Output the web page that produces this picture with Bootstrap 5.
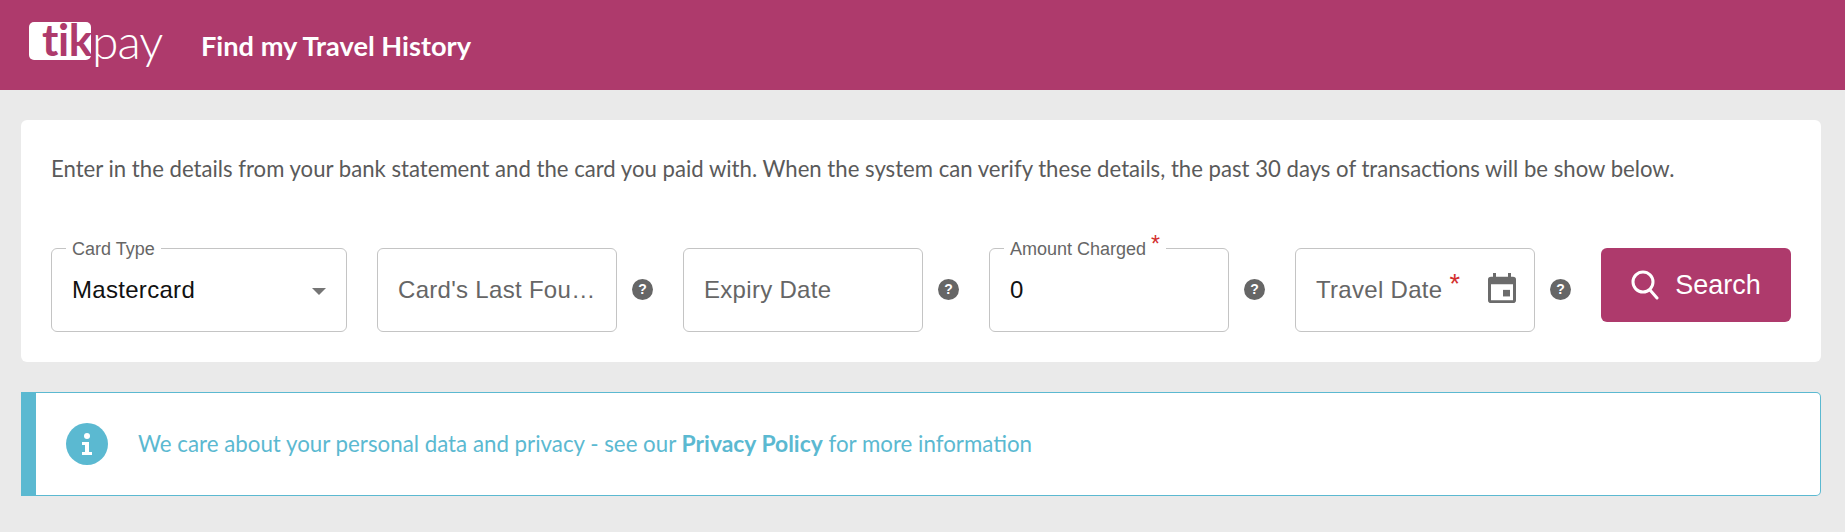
<!doctype html>
<html lang="en">

<head>
  <meta charset="utf-8">
  <meta name="viewport" content="width=device-width, initial-scale=1">
  <title>Find my Travel History</title>

  <link href="https://cdn.jsdelivr.net/npm/bootstrap@5.3.0/dist/css/bootstrap.min.css" rel="stylesheet">

  <style>
    body {
      background-color: #eaeaea;
      font-family: "Lato", sans-serif;
      color: #5a5a5a;
    }

    .top-bar {
      height: 90px;
      padding: 0 0 0 29px;
      background-color: #ae3a6c;
      flex-wrap: nowrap;
      justify-content: flex-start;
    }

    .logo {
      width: 134px;
      height: 46px;
      margin-top: -1px;
      margin-right: 38px;
      position: relative;
      flex: none;
    }

    .logo-box {
      position: absolute;
      left: 0;
      top: 0;
      width: 62px;
      height: 38px;
      background-color: #fff;
      border-radius: 5px;
    }

    .logo-tik {
      position: absolute;
      left: 13px;
      top: -9px;
      font: 700 44px/52px "Lato", sans-serif;
      letter-spacing: -.4px;
      color: #ae3a6c;
    }

    .logo-pay {
      position: absolute;
      left: 63px;
      top: -7px;
      font: 300 48px/52px "Lato", sans-serif;
      letter-spacing: -1px;
      color: #fff;
    }

    .page-title {
      font-size: 27.2px;
      font-weight: 700;
      color: #fff;
      margin: 3px 0 0;
    }

    .search-card {
      margin: 30px 24px 0 21px;
      height: 242px;
      padding: 36px 30px 0;
      border: 0;
      border-radius: 6px;
    }

    .intro {
      font-size: 22.15px;
      line-height: 26px;
      margin: 0 0 66px;
      white-space: nowrap;
    }

    .field {
      position: relative;
      width: 240px;
      height: 84px;
      padding: 0 20px;
      flex: none;
      border: 1px solid #c4c4c4;
      border-radius: 6px;
      font: 24px "Liberation Sans", Arial, sans-serif;
      color: #666;
      letter-spacing: .3px;
      white-space: nowrap;
    }

    .field-wide {
      width: 296px;
      margin-right: 30px;
    }

    .field-value {
      color: #111;
      letter-spacing: .3px;
    }

    .field-label {
      position: absolute;
      left: 14px;
      top: -10px;
      padding: 0 6px;
      background-color: #fff;
      font-size: 18px;
      line-height: 20px;
      letter-spacing: 0;
      color: #666;
      white-space: nowrap;
    }

    .req {
      color: #d32f2f;
    }

    .req-label {
      position: relative;
      top: -3px;
      font-size: 23px;
      line-height: 0;
    }

    .req-big {
      position: relative;
      top: -5px;
      font-size: 27px;
      line-height: 0;
    }

    .caret {
      position: absolute;
      right: 20px;
      top: 39px;
      width: 0;
      height: 0;
      border-left: 7px solid transparent;
      border-right: 7px solid transparent;
      border-top: 7px solid #757575;
    }

    .help {
      width: 21px;
      height: 21px;
      margin: 0 30px 1px 15px;
      flex: none;
      border-radius: 50%;
      background-color: #666;
      color: #fff;
      font: 700 14px/21px "Liberation Sans", Arial, sans-serif;
      text-align: center;
    }

    .cal-icon {
      margin: 0 -2px 4px 0;
      flex: none;
    }

    .btn-search {
      width: 190px;
      height: 74px;
      margin: 0 0 10px 0;
      flex: none;
      border: 0;
      border-radius: 6px;
      background-color: #ae3a6c;
      color: #fff;
      font: 27px "Liberation Sans", Arial, sans-serif;
    }

    .btn-search:hover {
      background-color: #ae3a6c;
      color: #fff;
    }

    .note {
      margin: 30px 24px 0 21px;
      height: 104px;
      padding: 0 0 2px 30px;
      border: 1px solid #5bb9d1;
      border-left: 15px solid #5bb9d1;
      border-radius: 0 5px 5px 0;
      background-color: #fff;
      color: #5bb9d1;
      font-size: 22.3px;
    }

    .note-icon {
      width: 42px;
      height: 42px;
      margin: 2px 30px 0 0;
      flex: none;
    }

    .note a {
      color: #5bb9d1;
      font-size: 22.9px;
      font-weight: 700;
      text-decoration: none;
    }
  </style>
</head>

<body>
  <nav class="navbar top-bar">
    <div class="logo">
      <div class="logo-box"><span class="logo-tik">tik</span></div>
      <span class="logo-pay">pay</span>
    </div>
    <h1 class="page-title">Find my Travel History</h1>
  </nav>

  <div class="card search-card">
    <p class="intro">Enter in the details from your bank statement and the card you paid with. When the system can verify these details, the past 30 days of transactions will be show below.</p>
    <div class="d-flex align-items-center">
      <div class="field field-wide d-flex align-items-center">
        <span class="field-label">Card Type</span>
        <span class="field-value">Mastercard</span>
        <span class="caret"></span>
      </div>
      <div class="field d-flex align-items-center">
        <span>Card's Last Fou…</span>
      </div>
      <div class="help">?</div>
      <div class="field d-flex align-items-center">
        <span>Expiry Date</span>
      </div>
      <div class="help">?</div>
      <div class="field d-flex align-items-center">
        <span class="field-label">Amount Charged <span class="req req-label">*</span></span>
        <span class="field-value">0</span>
      </div>
      <div class="help">?</div>
      <div class="field d-flex align-items-center justify-content-between">
        <span>Travel Date <span class="req req-big">*</span></span>
        <svg class="cal-icon" width="28" height="30" viewBox="1 1 28 32" preserveAspectRatio="none" fill="#6b6b6b">
          <path d="M6 1h3v4h12V1h3v4h2a3 3 0 0 1 3 3v22a3 3 0 0 1-3 3H4a3 3 0 0 1-3-3V8a3 3 0 0 1 3-3h2V1zM4 13v17h22V13H4z"/>
          <rect x="16" y="19" width="7" height="7"/>
        </svg>
      </div>
      <div class="help">?</div>
      <button type="button" class="btn btn-search d-flex align-items-center justify-content-center gap-3">
        <svg width="28" height="30" viewBox="0 0 28 30" fill="none" stroke="#fff" stroke-width="3" stroke-linecap="round">
          <circle cx="12" cy="12" r="10"/>
          <path d="M19 20l7 8"/>
        </svg>
        Search
      </button>
    </div>
  </div>

  <div class="note d-flex align-items-center">
    <svg class="note-icon" viewBox="0 0 42 42">
      <circle cx="21" cy="21" r="21" fill="#5bb9d1"/>
      <circle cx="21" cy="13" r="3" fill="#fff"/>
      <path d="M16 19h7v10h3v3H16v-3h3v-7h-3z" fill="#fff"/>
    </svg>
    <span>We care about your personal data and privacy - see our <a href="#">Privacy Policy</a> for more information</span>
  </div>

  <script src="https://cdn.jsdelivr.net/npm/bootstrap@5.3.0/dist/js/bootstrap.bundle.min.js"></script>
</body>

</html>
